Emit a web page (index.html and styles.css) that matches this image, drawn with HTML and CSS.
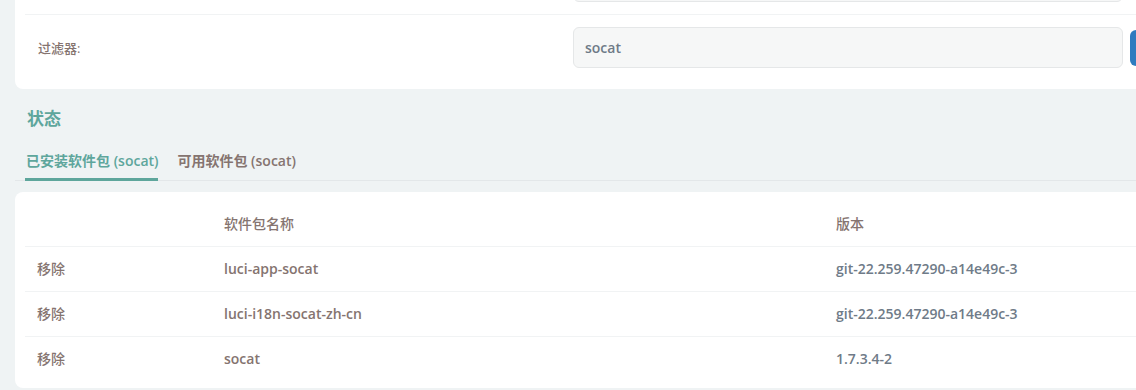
FILE: index.html
```html
<!DOCTYPE html>
<html lang="zh-CN">
<head>
  <meta charset="UTF-8" />
  <title>软件包 - socat</title>
  <link rel="stylesheet" href="styles.css">
</head>
<body>

<div class="main">

  <div class="cbi-section filter-card">
    <div class="cbi-value">
      <label class="cbi-value-title"></label>
      <input class="cbi-input" type="text" value="" />
      <button class="btn-blue"></button>
    </div>
    <div class="cbi-value">
      <label class="cbi-value-title" for="filter">过滤器:</label>
      <input class="cbi-input" id="filter" type="text" value="socat" />
      <button class="btn-blue"></button>
    </div>
  </div>

  <h3 class="section-title">状态</h3>

  <ul class="tabs">
    <li class="tab active">已安装软件包 (socat)</li>
    <li class="tab">可用软件包 (socat)</li>
  </ul>

  <div class="cbi-section table-card">
    <table class="pkg-table">
      <thead>
        <tr>
          <th class="col-action"></th>
          <th class="col-name">软件包名称</th>
          <th class="col-version">版本</th>
        </tr>
      </thead>
      <tbody>
        <tr>
          <td class="col-action">移除</td>
          <td class="col-name pkg-name">luci-app-socat</td>
          <td class="col-version pkg-version">git-22.259.47290-a14e49c-3</td>
        </tr>
        <tr>
          <td class="col-action">移除</td>
          <td class="col-name pkg-name">luci-i18n-socat-zh-cn</td>
          <td class="col-version pkg-version">git-22.259.47290-a14e49c-3</td>
        </tr>
        <tr>
          <td class="col-action">移除</td>
          <td class="col-name pkg-name">socat</td>
          <td class="col-version pkg-version">1.7.3.4-2</td>
        </tr>
      </tbody>
    </table>
  </div>

</div>

</body>
</html>
```

FILE: styles.css
```css
html, body {
  overflow: hidden;
}

body {
  margin: 0;
  background: #eff3f4;
  font-family: "Open Sans", "Noto Sans CJK SC", sans-serif;
  font-size: 14px;
  line-height: 18px;
  color: #857470;
}

.main {
  width: 1260px;
  margin-top: -61px;
  padding-left: 15px;
}

.cbi-section {
  background: #ffffff;
  border-radius: 8px;
  padding: 10px 10px;
}

.filter-card {
  padding-bottom: 9px;
}

.cbi-value {
  display: flex;
  align-items: center;
  padding: 12px 0;
  border-bottom: 1px solid #f1f3f4;
}

.cbi-value:last-child {
  border-bottom: none;
}

.cbi-value-title {
  width: 535px;
  padding-left: 13px;
  flex-shrink: 0;
  font-weight: 500;
  font-size: 13px;
}

.cbi-input {
  box-sizing: border-box;
  width: 550px;
  height: 41px;
  padding: 0 11px;
  border: 1px solid #e5e7e8;
  border-radius: 6px;
  background: #f6f7f7;
  font-family: inherit;
  font-size: 14px;
  font-weight: 600;
  color: #6f7b88;
  outline: none;
}

.btn-blue {
  width: 60px;
  height: 36px;
  margin-left: 7px;
  border: none;
  border-radius: 6px;
  background: #2f7bbf;
}

.section-title {
  margin: 0;
  padding: 18px 0 0 12px;
  height: 23px;
  line-height: 23px;
  font-size: 17px;
  font-weight: 700;
  color: #5ea69c;
}

.tabs {
  list-style: none;
  display: flex;
  gap: 18px;
  margin: 22px 0 11px 0;
  padding: 0 0 0 10px;
  border-bottom: 1px solid #e3e7e9;
}

.tab {
  padding: 0 0 8px 1px;
  font-weight: 600;
  color: #857470;
  border-bottom: 3px solid transparent;
  margin-bottom: -1px;
}

.tab.active {
  color: #5ea69c;
  border-bottom-color: #5ea69c;
}

.table-card {
  padding-bottom: 7px;
}

.pkg-table {
  width: 100%;
  border-collapse: collapse;
}

.pkg-table th,
.pkg-table td {
  height: 44px;
  padding: 0 12px;
  text-align: left;
  vertical-align: middle;
  border-bottom: 1px solid #f1f3f4;
}

.pkg-table tbody tr:last-child td {
  border-bottom: none;
}

.pkg-table th {
  font-weight: 500;
}

.pkg-table td.col-action {
  font-weight: 500;
}

.col-action {
  width: 163px;
}

.col-name {
  width: 588px;
}

.pkg-name {
  font-weight: 600;
}

.pkg-version {
  font-weight: 600;
  color: #6f7b88;
}
```
